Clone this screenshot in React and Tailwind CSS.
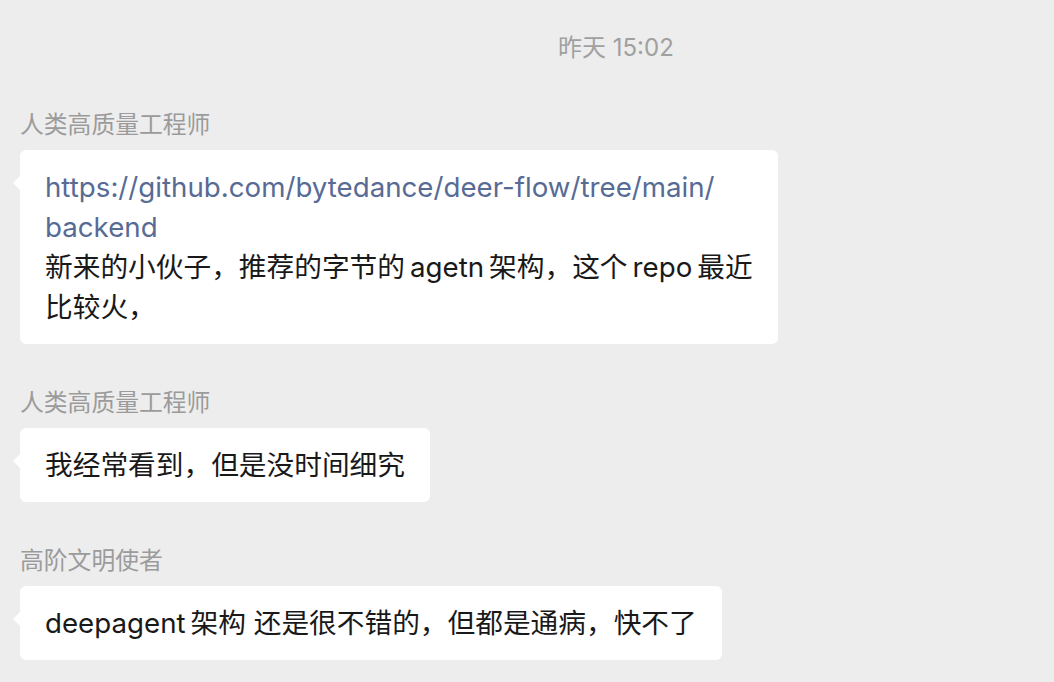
const FONT = { fontFamily: '"Inter", "Noto Sans CJK SC", sans-serif' }

function Bubble({ children }) {
  return (
    <div className="relative self-start">
      <div className="absolute left-[-7px] top-[26px] w-0 h-0 border-y-[7px] border-y-transparent border-r-[7px] border-r-white" />
      <div className="bg-white rounded-[6px] px-[25px] py-[17px] text-[27.7px] leading-[40px] text-[#191919]">
        {children}
      </div>
    </div>
  )
}

function Message({ name, children, first }) {
  return (
    <div className={`flex flex-col ${first ? '' : 'mt-[45px]'}`}>
      <div className="text-[23.8px] leading-[28px] text-[#9b9b9b] mb-[11px]">{name}</div>
      <Bubble>{children}</Bubble>
    </div>
  )
}

export default function App() {
  return (
    <div className="w-[1054px] h-[682px] bg-[#ededed] overflow-hidden px-[20px]" style={FONT}>
      <div className="pl-[538px] pt-[34px] text-[24px] leading-[28px] text-[#a0a0a0]">昨天 15:02</div>
      <div className="mt-[49px] flex flex-col">
        <Message name="人类高质量工程师" first>
          <span className="text-[#576b95]">
            https://github.com/bytedance/deer-flow/tree/main/
            <br />
            backend
          </span>
          <br />
          新来的小伙子，推荐的字节的{'\u2009'}agetn{'\u2009'}架构，这个{'\u2009'}repo{'\u2009'}最近
          <br />
          比较火，
        </Message>
        <Message name="人类高质量工程师">我经常看到，但是没时间细究</Message>
        <Message name="高阶文明使者">deepagent{'\u2009'}架构 还是很不错的，但都是通病，快不了</Message>
      </div>
    </div>
  )
}
